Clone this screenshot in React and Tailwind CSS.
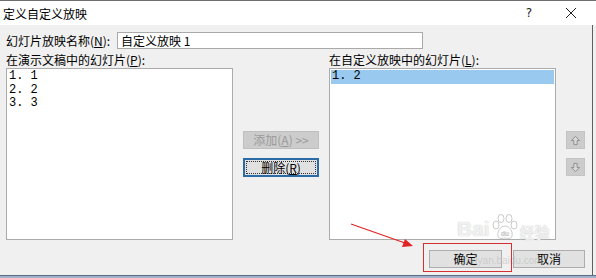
import React from "react";

function DialogButton({ children, className = "" }) {
  return (
    <div
      className={`flex h-[18px] items-center justify-center border border-[#adadad] bg-[#e1e1e1] text-[12px] leading-none ${className}`}
    >
      {children}
    </div>
  );
}

function ArrowButton({ down = false }) {
  return (
    <div className="flex h-[18px] w-[19px] items-center justify-center border border-[#c4c4c4] bg-[#cccccc]">
      <svg
        viewBox="0 0 12 12"
        className={`h-[11px] w-[11px] ${down ? "rotate-180" : ""}`}
        fill="#d8d8d8"
        stroke="#8c8c8c"
        strokeWidth="1"
        aria-hidden="true"
      >
        <path d="M6 1.5 L10.5 6 L7.8 6 L7.8 10.5 L4.2 10.5 L4.2 6 L1.5 6 Z" />
      </svg>
    </div>
  );
}

function ListBox({ items, selected }) {
  return (
    <div className="h-[172px] w-[227px] border border-[#ababab] bg-white px-[1px] pt-[1px]">
      {items.map((item, i) => (
        <div
          key={item}
          className={`h-[13.5px] whitespace-pre pl-[1px] font-['Liberation_Mono','Noto_Sans_CJK_SC',monospace] text-[12px] leading-[13.5px] ${
            selected === i ? "bg-[#99c9ef]" : ""
          }`}
        >
          {item}
        </div>
      ))}
    </div>
  );
}

function Paw() {
  return (
    <svg viewBox="0 0 30 30" className="h-[30px] w-[30px]" fill="rgba(255,255,255,0.8)" stroke="#bdbdbd" strokeWidth="0.8" aria-hidden="true">
      <ellipse cx="6" cy="12" rx="3" ry="4" />
      <ellipse cx="11" cy="5.5" rx="3" ry="4" />
      <ellipse cx="19" cy="5.5" rx="3" ry="4" />
      <ellipse cx="24" cy="12" rx="3" ry="4" />
      <path d="M15 13 C10 13 7 19 8 23 C9 27 13 25 15 25 C17 25 21 27 22 23 C23 19 20 13 15 13 Z" />
      <text x="15" y="23" textAnchor="middle" fontSize="7" fontFamily="Liberation Sans, sans-serif" fill="#c8c8c8" stroke="none">du</text>
    </svg>
  );
}

export default function App() {
  return (
    <div className="relative h-[278px] w-[596px] overflow-hidden bg-[#f0f0f0] font-['Noto_Sans_CJK_SC','Noto_Sans',sans-serif] text-[12px] text-black">
      {/* title bar */}
      <div className="flex h-[25px] items-center border-t border-[#6e6e6e] bg-white pl-[3px] pr-[20px]">
        <span className="pt-[1px] text-[12px] leading-none">定义自定义放映</span>
        <span className="ml-auto mr-[34px] font-['DejaVu_Sans',sans-serif] text-[12px] leading-none text-[#222]">
          ?
        </span>
        <svg viewBox="0 0 10 10" className="h-[10px] w-[10px]" stroke="#222" strokeWidth="1" aria-hidden="true">
          <path d="M0 0 L10 10 M10 0 L0 10" />
        </svg>
      </div>

      <div className="flex h-[250px] w-[593px] flex-col border-r border-[#5f5f5f] pl-[6px]">
        {/* name row */}
        <div className="mt-[7px] flex h-[17px] items-center">
          <span className="w-[111px] leading-none">
            幻灯片放映名称(<u>N</u>):
          </span>
          <div className="flex h-[17px] w-[306px] items-center border border-[#a9a9a9] bg-white pl-[3px] leading-none">
            自定义放映 1
          </div>
        </div>

        {/* labels */}
        <div className="mt-[3px] flex h-[16px] items-center leading-none">
          <span className="w-[323px]">
            在演示文稿中的幻灯片(<u>P</u>):
          </span>
          <span>
            在自定义放映中的幻灯片(<u>L</u>):
          </span>
        </div>

        {/* lists */}
        <div className="flex">
          <ListBox items={["1. 1", "2. 2", "3. 3"]} />
          <div className="flex w-[96px] flex-col gap-[9px] pl-[10px] pt-[63px]">
            <div className="flex h-[18px] w-[76px] items-center justify-center border border-[#bfbfbf] bg-[#cccccc] leading-none text-[#9a9a9a]">
              添加(<u>A</u>) &gt;&gt;
            </div>
            <div className="relative flex h-[19px] w-[76px] items-center justify-center border-2 border-[#2b6ca8] bg-[#e1e1e1] leading-none">
              <div className="absolute inset-[1px] border border-dotted border-[#333]" />
              <span className="relative">
                删除(<u>R</u>)
              </span>
            </div>
          </div>
          <ListBox items={["1. 2"]} selected={0} />
          <div className="ml-[10px] flex flex-col gap-[9px] pt-[63px]">
            <ArrowButton />
            <ArrowButton down />
          </div>
        </div>

        {/* ok / cancel */}
        <div className="mt-[10px] flex justify-end gap-[11px] pr-[7px]">
          <DialogButton className="w-[73px]">确定</DialogButton>
          <DialogButton className="w-[72px]">取消</DialogButton>
        </div>
      </div>

      {/* bottom window edge */}
      <div className="h-[1px] w-full bg-[#5d6c86]" />
      <div className="h-[2px] w-full bg-[#a3b1c9]" />

      {/* watermark */}
      <div className="pointer-events-none absolute left-[457px] top-[213px] flex items-end text-white/80 [text-shadow:0_0_1px_#b0b0b0]">
        <span className="mb-[4px] font-['Liberation_Sans',sans-serif] text-[21px] font-bold leading-none">Bai</span>
        <Paw />
        <span className="mb-[4px] text-[15px] font-bold leading-none">经验</span>
      </div>
      <div className="pointer-events-none absolute left-[462px] top-[256px] font-['Liberation_Sans',sans-serif] text-[10px] leading-none text-[#bdbdbd]/60">
        jingyan.baidu.com
      </div>

      {/* annotation */}
      <div className="pointer-events-none absolute left-[423px] top-[243px] h-[29px] w-[89px] border border-[#d43030]" />
      <svg
        className="pointer-events-none absolute left-[345px] top-[220px]"
        width="75"
        height="32"
        viewBox="0 0 75 32"
        aria-hidden="true"
      >
        <path d="M6 4 L60 23" stroke="#e02424" strokeWidth="1.2" />
        <path d="M68 26 L57 27 L60 19 Z" fill="#e02424" />
      </svg>
    </div>
  );
}
